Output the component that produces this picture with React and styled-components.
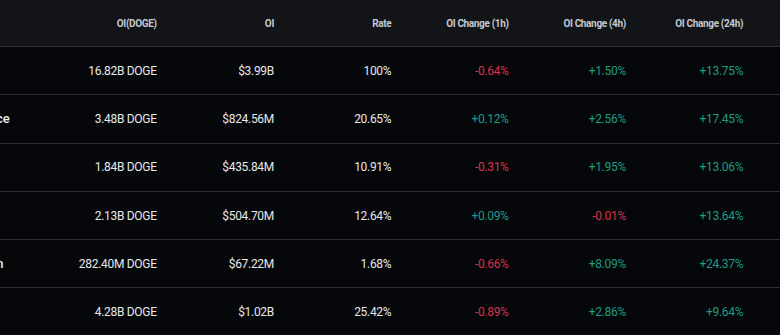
import React from "react";
import styled, { createGlobalStyle } from "styled-components";

const rows = [
  { name: "All", doge: "16.82B DOGE", oi: "$3.99B", rate: "100%", h1: "-0.64%", h4: "+1.50%", h24: "+13.75%" },
  { name: "Binance", doge: "3.48B DOGE", oi: "$824.56M", rate: "20.65%", h1: "+0.12%", h4: "+2.56%", h24: "+17.45%" },
  { name: "OKX", doge: "1.84B DOGE", oi: "$435.84M", rate: "10.91%", h1: "-0.31%", h4: "+1.95%", h24: "+13.06%" },
  { name: "Bybit", doge: "2.13B DOGE", oi: "$504.70M", rate: "12.64%", h1: "+0.09%", h4: "-0.01%", h24: "+13.64%" },
  { name: "Kraken", doge: "282.40M DOGE", oi: "$67.22M", rate: "1.68%", h1: "-0.66%", h4: "+8.09%", h24: "+24.37%" },
  { name: "Gate", doge: "4.28B DOGE", oi: "$1.02B", rate: "25.42%", h1: "-0.89%", h4: "+2.86%", h24: "+9.64%" },
];

const headers = ["OI(DOGE)", "OI", "Rate", "OI Change (1h)", "OI Change (4h)", "OI Change (24h)"];

const GlobalStyle = createGlobalStyle`
  html, body {
    margin: 0;
    padding: 0;
    background: #05070a;
    overflow: hidden;
  }
  body {
    font-family: Roboto, "Liberation Sans", sans-serif;
  }
`;

// the table is scrolled sideways: the exchange column sits mostly off the left edge
const Viewport = styled.div`
  width: 780px;
  height: 335px;
  overflow: hidden;
  background: #05070a;
`;

const Table = styled.div`
  width: 828px;
  margin-left: -48px;
`;

const Row = styled.div`
  display: grid;
  grid-template-columns: 87.4px repeat(6, 117.3px) 1fr;
  align-items: center;
  height: ${(p) => (p.head ? "46px" : "47.3px")};
  background: ${(p) => (p.head ? "#121418" : "#05070a")};
  border-bottom: 1px solid #2a2d33;
`;

const HeadCell = styled.div`
  text-align: right;
  font-size: 10px;
  font-weight: 700;
  letter-spacing: -0.35px;
  color: #c3c8d0;
  white-space: nowrap;
`;

const Name = styled.div`
  padding-left: 11px;
  font-size: 13px;
  font-weight: 500;
  color: #eaecef;
  white-space: nowrap;
`;

const Cell = styled.div`
  text-align: right;
  font-size: 12px;
  letter-spacing: -0.3px;
  color: ${(p) => (p.tone === "up" ? "#1f9c80" : p.tone === "down" ? "#dc3049" : "#e6e8eb")};
  white-space: nowrap;
`;

const tone = (v) => (v.startsWith("-") ? "down" : "up");

export default function App() {
  return (
    <Viewport>
      <GlobalStyle />
      <Table>
        <Row head>
          <span />
          {headers.map((h) => (
            <HeadCell key={h}>{h}</HeadCell>
          ))}
        </Row>
        {rows.map((r) => (
          <Row key={r.name}>
            <Name>{r.name}</Name>
            <Cell>{r.doge}</Cell>
            <Cell>{r.oi}</Cell>
            <Cell>{r.rate}</Cell>
            <Cell tone={tone(r.h1)}>{r.h1}</Cell>
            <Cell tone={tone(r.h4)}>{r.h4}</Cell>
            <Cell tone={tone(r.h24)}>{r.h24}</Cell>
          </Row>
        ))}
      </Table>
    </Viewport>
  );
}
